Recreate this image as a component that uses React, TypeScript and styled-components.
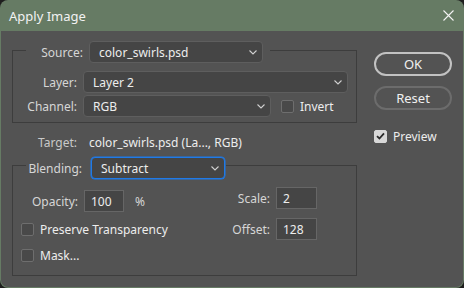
import React from 'react';
import styled, { createGlobalStyle } from 'styled-components';

const colors = {
  frame: '#667b64',
  body: '#535353',
  field: '#454545',
  fieldBorder: '#5e5e5e',
  groupLine: '#3d3d3d',
  label: '#d6d6d6',
  value: '#ededed',
  focus: '#1f7ae8',
};

const GlobalStyle = createGlobalStyle`
  html, body {
    margin: 0;
    padding: 0;
    background: #1e1e1e;
  }
  body {
    font-family: "Noto Sans", "Open Sans", sans-serif;
    font-size: 12px;
  }
  * { box-sizing: border-box; }
`;

const Window = styled.div`
  width: 464px;
  height: 288px;
  display: flex;
  flex-direction: column;
  background: ${colors.frame};
  border-radius: 8px;
  overflow: hidden;
`;

const TitleBar = styled.div`
  height: 31px;
  flex: none;
  display: flex;
  align-items: center;
  justify-content: space-between;
  padding: 0 10px 0 9px;
  color: #f2f2f2;
  font-size: 13px;
`;

const CloseButton = styled.div`
  width: 12px;
  height: 12px;
  display: flex;
  align-items: center;
  justify-content: center;
`;

const Body = styled.div`
  flex: 1;
  display: flex;
  margin: 0 1px 1px 1px;
  padding: 6px 0 0 11px;
  background: ${colors.body};
  border-radius: 0 0 7px 7px;
`;

const Main = styled.div`
  width: 345px;
  display: flex;
  flex-direction: column;
`;

const Side = styled.div`
  margin-left: 17px;
  padding-top: 15px;
  width: 78px;
  display: flex;
  flex-direction: column;
`;

const Group = styled.fieldset<{ padBottom: number }>`
  margin: 0;
  padding: 0 0 ${(p) => p.padBottom}px 0;
  border: 1px solid ${colors.groupLine};
  min-width: 0;
`;

const Legend = styled.legend<{ padTop: number; gap: number; padRight: number }>`
  margin-left: 13px;
  padding: ${(p) => p.padTop}px ${(p) => p.padRight}px 0 0;
  display: flex;
  align-items: center;
  gap: ${(p) => p.gap}px;
`;

const Label = styled.span<{ width: number; dim?: boolean }>`
  width: ${(p) => p.width}px;
  flex: none;
  text-align: right;
  color: ${(p) => (p.dim ? '#c9c9c9' : colors.label)};
  white-space: nowrap;
`;

const Select = styled.div<{ width: number; focused?: boolean }>`
  width: ${(p) => p.width}px;
  height: 22px;
  flex: none;
  display: flex;
  align-items: center;
  justify-content: space-between;
  padding: 0 5px 0 9px;
  background: ${colors.field};
  border: 1px solid ${(p) => (p.focused ? colors.focus : colors.fieldBorder)};
  box-shadow: ${(p) => (p.focused ? `0 0 0 0.5px ${colors.focus}` : 'none')};
  border-radius: 4px;
  color: ${colors.value};
  white-space: nowrap;
`;

const Rows = styled.div`
  margin-top: 8px;
  display: flex;
  flex-direction: column;
  gap: 2px;
`;

const Row = styled.div<{ gap: number }>`
  display: flex;
  align-items: center;
  gap: ${(p) => p.gap}px;
`;

const TargetRow = styled.div`
  height: 18px;
  margin-top: 10px;
  display: flex;
  align-items: center;
  gap: 12px;
`;

const Value = styled.span`
  color: ${colors.value};
  white-space: nowrap;
`;

const CheckRow = styled.label<{ indent?: number }>`
  height: 18px;
  display: flex;
  align-items: center;
  gap: 6px;
  margin-left: ${(p) => p.indent || 0}px;
  color: ${colors.value};
  white-space: nowrap;
`;

const Box = styled.span<{ checked?: boolean }>`
  width: 13px;
  height: 13px;
  flex: none;
  display: flex;
  align-items: center;
  justify-content: center;
  border-radius: 2px;
  border: 1px solid ${(p) => (p.checked ? '#d8d8d8' : '#6e6e6e')};
  background: ${(p) => (p.checked ? '#d8d8d8' : '#494949')};
`;

const BlendArea = styled.div`
  display: flex;
  justify-content: space-between;
  padding: 0 39px 11px 8px;
`;

const LeftCol = styled.div`
  padding-top: 11px;
  display: flex;
  flex-direction: column;
  gap: 8px;
`;

const RightCol = styled.div`
  padding-top: 8px;
  display: flex;
  flex-direction: column;
  gap: 9px;
`;

const NumberField = styled.div<{ width: number }>`
  width: ${(p) => p.width}px;
  height: 22px;
  flex: none;
  display: flex;
  align-items: center;
  padding-left: 6px;
  background: ${colors.field};
  border: 1px solid #666666;
  color: ${colors.value};
`;

const Unit = styled.span`
  margin-left: 5px;
  color: ${colors.label};
`;

const Button = styled.div<{ primary?: boolean }>`
  height: 24px;
  display: flex;
  align-items: center;
  justify-content: center;
  border-radius: 12px;
  border: 2px solid ${(p) => (p.primary ? '#c2c2c2' : '#6c6c6c')};
  color: #f0f0f0;
  font-size: 13px;
  & + & {
    margin-top: 10px;
  }
`;

const PreviewRow = styled(CheckRow)`
  margin-top: 17px;
`;

const Chevron = () => (
  <svg width="8" height="5" viewBox="0 0 8 5">
    <path d="M0.5 0.5 L4 4 L7.5 0.5" fill="none" stroke="#cfcfcf" strokeWidth="1.1" />
  </svg>
);

const Check = () => (
  <svg width="9" height="8" viewBox="0 0 9 8">
    <path d="M1 4.2 L3.4 6.5 L8 1.3" fill="none" stroke="#2b2b2b" strokeWidth="1.8" />
  </svg>
);

const Dropdown = ({ width, text, focused }: { width: number; text: string; focused?: boolean }) => (
  <Select width={width} focused={focused}>
    <span>{text}</span>
    <Chevron />
  </Select>
);

export default function App() {
  return (
    <>
      <GlobalStyle />
      <Window>
        <TitleBar>
          <span>Apply Image</span>
          <CloseButton>
            <svg width="11" height="11" viewBox="0 0 11 11">
              <path d="M0.5 0.5 L10.5 10.5 M10.5 0.5 L0.5 10.5" stroke="#f2f2f2" strokeWidth="1.1" />
            </svg>
          </CloseButton>
        </TitleBar>
        <Body>
          <Main>
            <Group padBottom={5}>
              <Legend padTop={4} gap={6} padRight={7}>
                <Label width={57}>Source:</Label>
                <Dropdown width={174} text="color_swirls.psd" />
              </Legend>
              <Rows>
                <Row gap={6}>
                  <Label width={64}>Layer:</Label>
                  <Dropdown width={265} text="Layer 2" />
                </Row>
                <Row gap={6}>
                  <Label width={64}>Channel:</Label>
                  <Dropdown width={188} text="RGB" />
                  <CheckRow indent={4}>
                    <Box />
                    Invert
                  </CheckRow>
                </Row>
              </Rows>
            </Group>

            <TargetRow>
              <Label width={65} dim>
                Target:
              </Label>
              <Value>color_swirls.psd (La..., RGB)</Value>
            </TargetRow>

            <Group padBottom={0}>
              <Legend padTop={6} gap={9} padRight={1}>
                <Label width={56}>Blending:</Label>
                <Dropdown width={134} text="Subtract" focused />
              </Legend>
              <BlendArea>
                <LeftCol>
                  <Row gap={6}>
                    <Label width={57}>Opacity:</Label>
                    <NumberField width={40}>100</NumberField>
                    <Unit>%</Unit>
                  </Row>
                  <CheckRow>
                    <Box />
                    Preserve Transparency
                  </CheckRow>
                  <CheckRow>
                    <Box />
                    Mask...
                  </CheckRow>
                </LeftCol>
                <RightCol>
                  <Row gap={6}>
                    <Label width={45}>Scale:</Label>
                    <NumberField width={41}>2</NumberField>
                  </Row>
                  <Row gap={6}>
                    <Label width={45}>Offset:</Label>
                    <NumberField width={41}>128</NumberField>
                  </Row>
                </RightCol>
              </BlendArea>
            </Group>
          </Main>

          <Side>
            <Button primary>OK</Button>
            <Button>Reset</Button>
            <PreviewRow>
              <Box checked>
                <Check />
              </Box>
              Preview
            </PreviewRow>
          </Side>
        </Body>
      </Window>
    </>
  );
}
